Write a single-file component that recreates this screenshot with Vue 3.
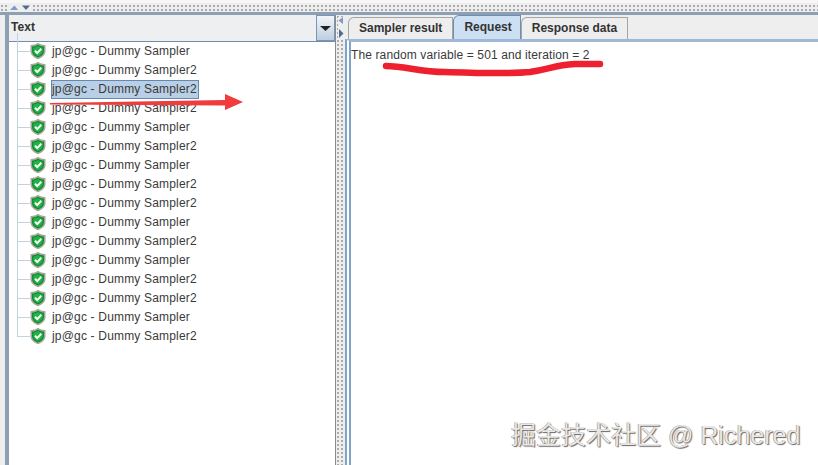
<script setup>
const names = [1,2,2,2,1,2,1,2,2,1,2,1,2,2,1,2].map(n => n === 1 ? 'jp@gc - Dummy Sampler' : 'jp@gc - Dummy Sampler2')
const tabs = ['Sampler result', 'Request', 'Response data']
</script>

<template>
  <div class="app">
    <div class="topline"></div>
    <div class="hsplit">
      <svg class="arrows" width="24" height="6" viewBox="0 0 24 6"><path d="M3 5 L7.500 .5 L11 5Z" fill="#7f9cbd"/><path d="M15 .5 L23 .5 L19 5Z" fill="#4f6c90"/></svg>
    </div>
    <div class="body">
      <div class="leftedge"></div>
      <section class="left">
        <div class="combo">
          <span class="combo-label">Text</span>
          <span class="combo-btn"><svg width="11" height="5" viewBox="0 0 11 5"><path d="M0 0H11L5.500 5Z" fill="#222"/></svg></span>
        </div>
        <ul class="tree">
          <li v-for="(n, i) in names" :key="i" class="row">
            <span class="guide"></span>
            <svg class="shield" width="16" height="18" viewBox="0 0 17 18">
              <path d="M8.500 .3 C10.500 1.800 13.500 2.600 16.500 2.800 V9 C16.500 13 13.500 15.700 8.500 17.800 C3.500 15.700 .5 13 .5 9 V2.800 C3.500 2.600 6.500 1.800 8.500 .3Z" fill="#a3a996"/>
              <path d="M8.500 2.300 C10.300 3.400 12.500 4.100 14.800 4.300 V9 C14.800 12.300 12.200 14.400 8.500 16 C4.800 14.400 2.200 12.300 2.200 9 V4.300 C4.500 4.100 6.700 3.400 8.500 2.300Z" fill="#128632"/>
              <path d="M8.500 3.800 C10 4.700 11.800 5.300 13.500 5.500 V9 C13.500 11.500 11.500 13.300 8.500 14.600 C5.500 13.300 3.500 11.500 3.500 9 V5.500 C5.200 5.300 7 4.700 8.500 3.800Z" fill="#1eb446"/>
              <path d="M5.300 8.800 L7.700 11.200 L12 6.600" fill="none" stroke="#fff" stroke-width="2.100"/>
            </svg>
            <span class="label" :class="{ selected: i === 2 }">{{ n }}</span>
          </li>
        </ul>
      </section>
      <div class="vsplit">
        <svg width="6" height="21" viewBox="0 0 6 21"><path d="M5 0V7L0.500 3.500Z" fill="#7f9cbd"/><path d="M1 12V21L5.500 16.500Z" fill="#4f6c90"/></svg>
      </div>
      <section class="right">
        <div class="tabs">
          <span v-for="(t, i) in tabs" :key="t" class="tab" :class="{ active: i === 1 }">{{ t }}</span>
        </div>
        <div class="pane">
          <div class="content">The random variable = 501 and iteration = 2</div>
        </div>
      </section>
    </div>

    <svg class="marks" width="818" height="465" viewBox="0 0 818 465">
      <path d="M50 103 L225 100 V94 L243 102 L225 110 V105.500 L50 104.500Z" fill="#f03c3c"/>
      <path d="M386 66 C405 66 420 72 445 72 C480 73 510 74 530 72 C550 69 555 65 575 64 L600 64" fill="none" stroke="#ee2030" stroke-width="6.500" stroke-linecap="round"/>
    </svg>
    <div class="watermark">掘金技术社区 @ Richered</div>
  </div>
</template>

<style scoped>
.app { position: relative; width: 818px; height: 465px; overflow: hidden; display: flex; flex-direction: column; background: #eeeeee; font-family: "Liberation Sans", Arial, sans-serif; }
.topline { height: 3px; background: #f6f6f6; flex: none; }
.hsplit { height: 9px; flex: none; display: flex; align-items: center; padding-left: 7px; background-color: #eeeeee; background-image: radial-gradient(#a9a9a9 0.7px, transparent 0.9px); background-size: 4px 4px; background-position: 0 1px; }
.arrows { background: #eeeeee; }
.body { flex: 1; display: flex; min-height: 0; border-top: 3px solid #8d9fb3; }
.leftedge { width: 5px; flex: none; background: #eeeeee; }
.left { width: 330px; flex: none; display: flex; flex-direction: column; background: #fff; border-left: 4px solid #8d9fb3; box-sizing: border-box; }
.combo { height: 26px; flex: none; display: flex; align-items: stretch; justify-content: space-between; background: #eeeff1; border-bottom: 1px solid #6f8db0; box-sizing: content-box; }
.combo-label { font-weight: 700; font-size: 12px; color: #333; padding-left: 2px; line-height: 24px; letter-spacing: 0.1px; }
.combo-btn { width: 19px; display: flex; align-items: center; justify-content: center; background: linear-gradient(#f2f5f9, #bdcee0); border: 1px solid #7b96b4; box-sizing: border-box; }
.tree { list-style: none; margin: 0; padding: 0; flex: 1; }
.row { height: 19px; position: relative; display: flex; align-items: center; }
.guide { position: absolute; left: 8px; top: -9px; width: 13px; height: 19px; border-left: 1px solid #c3d2e2; border-bottom: 1px solid #c3d2e2; box-sizing: border-box; }
.shield { position: absolute; left: 21px; top: 0; }
.label { position: absolute; left: 42px; top: 0; height: 19px; line-height: 18px; padding: 0 2px 0 1px; font-size: 12px; letter-spacing: 0.18px; color: #3a3a3a; white-space: nowrap; box-sizing: border-box; }
.selected { background: #b8cfe5; outline: 1px solid #6389b2; outline-offset: -1px; }
.vsplit { width: 10px; flex: none; display: flex; flex-direction: column; align-items: center; background-color: #eeeeee; background-image: radial-gradient(#a9a9a9 0.7px, transparent 0.9px); background-size: 4px 4px; border-left: 1px solid #8b8b8b; box-sizing: border-box; }
.vsplit svg { background: #eeeeee; margin-top: 2px; }
.right { flex: 1; display: flex; flex-direction: column; min-width: 0; background: #eeeeee; }
.tabs { height: 24px; flex: none; display: flex; align-items: flex-end; padding-left: 3px; background: #eeeeee; }
.tab { height: 22px; line-height: 20px; padding: 0 10px; font-size: 12px; font-weight: 700; color: #333; background: #eeeeee; border: 1px solid #a5a5a5; border-bottom: 0; box-sizing: border-box; border-top-left-radius: 6px; }
.tab.active { height: 24px; line-height: 22px; padding-right: 8px; background: #cddff2; border-color: #6f8db0; }
.pane { flex: 1; border-left: 6px double #7fa3ca; border-top: 3px solid #9db9d6; background: #fff; min-height: 0; }
.content { padding: 6px 0 0 0; font-size: 12px; line-height: 15px; letter-spacing: 0.12px; color: #3a3a3a; }
.marks { position: absolute; inset: 0; pointer-events: none; }
.watermark { position: absolute; left: 511px; top: 419px; font-size: 25px; line-height: 32px; color: #e8e8e8; white-space: nowrap; font-family: "Liberation Sans", "Noto Sans CJK SC", sans-serif; text-shadow: 1px 1px 1px #666, -0.5px -0.5px 0 #888; }
</style>
